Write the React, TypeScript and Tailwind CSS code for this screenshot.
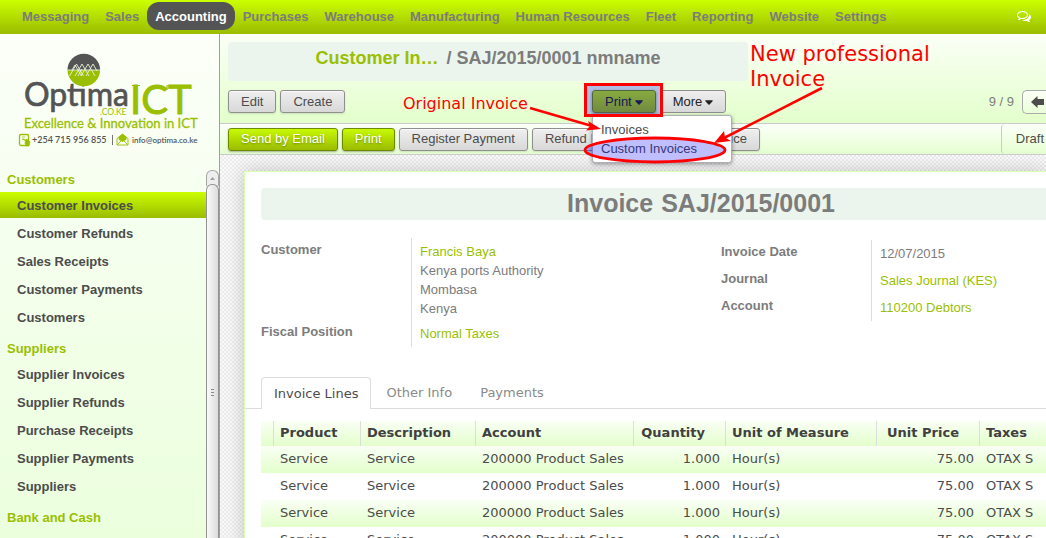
import React from "react";
import { FaCaretDown } from "react-icons/fa";

const menus = [
  "Messaging",
  "Sales",
  "Accounting",
  "Purchases",
  "Warehouse",
  "Manufacturing",
  "Human Resources",
  "Fleet",
  "Reporting",
  "Website",
  "Settings",
];

const sections = [
  {
    title: "Customers",
    items: ["Customer Invoices", "Customer Refunds", "Sales Receipts", "Customer Payments", "Customers"],
  },
  {
    title: "Suppliers",
    items: ["Supplier Invoices", "Supplier Refunds", "Purchase Receipts", "Supplier Payments", "Suppliers"],
  },
  { title: "Bank and Cash", items: [] },
];

const lines = [1, 2, 3, 4].map((id) => ({
  id,
  product: "Service",
  description: "Service",
  account: "200000 Product Sales",
  quantity: "1.000",
  unit: "Hour(s)",
  price: "75.00",
  taxes: "OTAX S",
}));

const greyButton =
  "flex h-[23px] shrink-0 items-center whitespace-nowrap rounded-[3px] border border-[#8f8f8f] bg-linear-to-b from-[#efefef] to-[#d8d8d8] px-3 text-[#4c4c4c] shadow-[0_1px_2px_rgba(0,0,0,0.12),inset_0_1px_0_rgba(255,255,255,0.7)]";
const greenButton =
  "flex h-[23px] shrink-0 items-center whitespace-nowrap rounded-[3px] border border-[#6f8800] bg-linear-to-b from-[#c8fa00] to-[#9abc00] px-3 text-white shadow-[0_1px_2px_rgba(0,0,0,0.3)] [text-shadow:0_1px_2px_rgba(0,0,0,0.35)]";

function Logo() {
  return (
    <svg
      className="block h-[133px] w-[219px]"
      viewBox="0 34 219 133"
      role="img"
      aria-label="Optima ICT"
      fontFamily="Lato, 'Open Sans', sans-serif"
    >
      <text x="24" y="106" fontSize="32" fill="#545454" stroke="#545454" strokeWidth="0.700">Optima</text>
      <path d="M67.500 70a16.300 16.300 0 0 1 32.600 0z" fill="#545454" />
      <path d="M67.500 70a16.300 16.300 0 0 0 32.600 0z" fill="#9abf00" />
      <path
        d="M67.500 70H100M69.500 76l7-12 7 12M75 76l7-12 7 12M81 76l7-12 7 12M72 70l3-5 6.500 11M78 76l4-7M86 76l7-12 4 7"
        fill="none"
        stroke="#e9f3d8"
        strokeWidth="0.900"
        strokeLinejoin="round"
      />
      <text x="130" y="114" fontSize="40" fill="#9abf00" stroke="#9abf00" strokeWidth="1">ICT</text>
      <path d="M132 85.500h8M167 85v5M190.500 85v4" stroke="#9abf00" strokeWidth="1.200" />
      <text x="100" y="115" fontSize="8.500" fill="#9abf00">.CO.KE</text>
      <text x="24" y="128" fontSize="13" fill="#9abf00" stroke="#9abf00" strokeWidth="0.300">Excellence &amp; Innovation in ICT</text>
      <rect x="19.500" y="134.500" width="9" height="11" rx="1.500" fill="none" stroke="#9abf00" strokeWidth="1.300" />
      <path d="M22 137h3M22 139h2l3 3M25 143l1-4 2 1 2 2-1 4h-3z" fill="#9abf00" stroke="#9abf00" strokeWidth="0.700" />
      <text x="32" y="143" fontSize="9" fontWeight="600" fill="#545454">+254 715 956 855</text>
      <path d="M112.500 135v10" stroke="#545454" strokeWidth="0.800" />
      <path d="M117 138.500l5.500-4.500 5.500 4.500v6.500h-11z" fill="#f9fff3" stroke="#9abf00" strokeWidth="0.900" />
      <path d="M118.500 137l4-3 4 3v2.500l-4 2.500-4-2.500z" fill="#9abf00" />
      <path d="M117 145l4-4M128 145l-4-4" stroke="#9abf00" strokeWidth="0.900" />
      <text x="132" y="143" fontSize="8" fontWeight="600" fill="#545454">info@optima.co.ke</text>
    </svg>
  );
}

function Sidebar() {
  return (
    <aside className="flex w-[220px] shrink-0 flex-col border-r border-[#a0a0a0] bg-linear-to-b from-[#fcfff9] to-[#ebffdd]">
      <Logo />
      <div className="flex min-h-0 flex-1">
        <nav className="min-w-0 flex-1 overflow-hidden font-bold">
          {sections.map((section) => (
            <section key={section.title} className="mb-1.5">
              <h2 className="pl-[7px] leading-[25px] text-[#9abf00]">{section.title}</h2>
              <ul className="flex flex-col gap-0.5">
                {section.items.map((item) => (
                  <li key={item}>
                    <a
                      href="#"
                      className={
                        item === "Customer Invoices"
                          ? "block bg-linear-to-b from-[#ccff00] to-[#9abc00] pl-[17px] pt-0.5 leading-6 text-[#4c4c4c]"
                          : "block pl-[17px] pt-0.5 leading-6 text-[#4c4c4c]"
                      }
                    >
                      {item}
                    </a>
                  </li>
                ))}
              </ul>
            </section>
          ))}
        </nav>
        <div className="mt-[3px] flex w-[13px] shrink-0 flex-col" aria-hidden="true">
          <div className="flex h-4 items-center justify-center rounded-t-md border border-b-0 border-[#a6a6a6] bg-[#eeeeee]">
            <svg className="h-[3px] w-[5px]" viewBox="0 0 5 3">
              <path d="M0 3L2.500 0 5 3z" fill="#a0a0a0" />
            </svg>
          </div>
          <div className="-mt-0.5 flex flex-1 items-center justify-center rounded-t-md border border-b-0 border-[#929292] bg-linear-to-r from-[#fafafa] to-[#dcdcdc]">
            <svg className="mb-[-62px] h-[7px] w-[3px]" viewBox="0 0 3 7">
              <path d="M0 .5h3M0 3.500h3M0 6.500h3" stroke="#8a8a8a" />
            </svg>
          </div>
        </div>
      </div>
    </aside>
  );
}

function Annotations() {
  return (
    <div className="pointer-events-none absolute inset-0 z-20 font-['DejaVu_Sans',sans-serif] text-[#ff0000]">
      <svg className="absolute left-0 top-0 h-[140px] w-[640px]" viewBox="220 34 640 140">
        <rect x="585.500" y="84.500" width="76" height="31" fill="#0000ff" fillOpacity="0.250" stroke="#ff0000" strokeWidth="3" />
        <ellipse cx="655" cy="150" rx="70" ry="12" fill="#0000ff" fillOpacity="0.250" stroke="#ff0000" strokeWidth="2.800" />
        <path d="M530 108L592 126" stroke="#ff0000" strokeWidth="2.600" />
        <path d="M601 129L586 130.500 590 126 588 121z" fill="#ff0000" />
        <path d="M822 88L724 138" stroke="#ff0000" strokeWidth="2.600" />
        <path d="M714 143L724 131 725 137.500 731 141z" fill="#ff0000" />
      </svg>
      <p className="absolute left-[183px] top-[60px] whitespace-nowrap text-[16px] leading-5">Original Invoice</p>
      <p className="absolute left-[530px] top-2 whitespace-nowrap text-[21px] leading-[25px]">
        New professional
        <br />
        Invoice
      </p>
    </div>
  );
}

function ViewHeader() {
  return (
    <div className="relative z-10">
      <div className="flex h-[90px] flex-col border-b border-[#cacaca] bg-linear-to-b from-[#fbfff6] to-[#e3ffcb] pl-2 pt-2">
        <h1 className="flex h-[39px] w-full max-w-[520px] items-center justify-center gap-2 rounded bg-[#ebf5ee] pb-[6px] text-[18px] font-bold text-[#7c7c7c]">
          <a href="#" className="text-[#9abf00]">Customer In…</a>
          <span>/ SAJ/2015/0001 nmname</span>
        </h1>
        <div className="mt-[9px] flex h-[23px] items-center">
          <div className="flex w-[364px] shrink-0 gap-1">
            <button className={greyButton}>Edit</button>
            <button className={greyButton}>Create</button>
          </div>
          <div className="relative flex gap-1">
            <button className="flex h-[23px] items-center gap-[3px] rounded-[3px] border border-[#6f8800] bg-linear-to-b from-[#b6e400] to-[#97b800] px-3 text-[#222222] shadow-[0_1px_3px_rgba(0,0,0,0.4)]">
              Print
              <FaCaretDown className="h-[14px] w-2" preserveAspectRatio="none" />
            </button>
            <button className="flex h-[23px] items-center gap-[3px] rounded-[3px] border border-[#8f8f8f] bg-linear-to-b from-[#efefef] to-[#d8d8d8] px-3 text-[#222222]">
              More
              <FaCaretDown className="h-[14px] w-2" preserveAspectRatio="none" />
            </button>
            <ul className="absolute left-0 top-[25px] h-12 w-[140px] rounded-[3px] border border-[#afafb6] bg-white py-1 shadow-[0_1px_4px_rgba(0,0,0,0.4)]">
              <li><a href="#" className="block pl-2 leading-[19px] text-[#4c4c4c]">Invoices</a></li>
              <li><a href="#" className="block pl-2 leading-[19px] text-[#4c4c4c]">Custom Invoices</a></li>
            </ul>
          </div>
          <div className="ml-auto flex items-center gap-2 text-[#7c7c7c]">
            <span>9 / 9</span>
            <button
              aria-label="Previous record"
              className="flex h-6 w-6 items-center justify-end rounded-l-[5px] border border-r-0 border-[#ababab] bg-linear-to-b from-[#fbfff6] to-[#eaffd8] pr-0.5"
            >
              <PreviousIcon />
            </button>
          </div>
        </div>
      </div>
      <div className="flex h-[31px] items-center gap-1 border-b border-[#cacaca] bg-linear-to-b from-[#fcfff9] to-[#e5ffd0] pl-2">
        <button className={greenButton}>Send by Email</button>
        <button className={greenButton}>Print</button>
        <button className={greyButton}>Register Payment</button>
        <button className={greyButton}>Refund Invoice</button>
        <button className={greyButton}>Cancel Invoice</button>
        <span className="ml-auto flex h-[30px] items-center rounded-l border-l border-[#cacaca] pl-[14px] pr-0.5 text-[#4c4c4c]">
          Draft
        </span>
      </div>
      <Annotations />
    </div>
  );
}

function PreviousIcon() {
  return (
    <svg className="h-3 w-[13px]" viewBox="0 0 13 12" aria-hidden="true">
      <path d="M0 6L6.500 0V3H13V9H6.500V12z" fill="#4c4c4c" />
    </svg>
  );
}

function MessagesIcon() {
  return (
    <svg className="size-[14px]" viewBox="0 0 1792 1792" fill="currentColor" aria-hidden="true">
      <path d="M704 384q-153 0-286 52t-211.500 141-78.500 191q0 82 53 158t149 132l97 56-35 84q34-20 62-39l44-31 53 10q78 14 153 14 153 0 286-52t211.500-141 78.500-191-78.500-191-211.500-141-286-52zm0-128q191 0 353.500 68.500t256.500 186.500 94 257-94 257-256.500 186.500-353.500 68.500q-86 0-176-16-124 88-278 128-36 9-86 16h-3q-11 0-20.500-8t-11.500-21q-1-3-1-6.500t.5-6.500 2-6l2.500-5 3.500-5.500 4-5 4.500-5 4-4.500q5-6 23-25t26-29.500 22.500-29 25-38.500 20.500-44q-124-72-195-177t-71-224q0-139 94-257t256.500-186.500 353.500-68.500zm822 1169q10 24 20.500 44t25 38.500 22.500 29 26 29.500 23 25q1 1 4 4.500t4.500 5 4 5 3.500 5.500l2.500 5 2 6 .5 6.500-1 6.500q-3 14-13 22t-22 7q-50-7-86-16-154-40-278-128-90 16-176 16-271 0-472-132 58 4 88 4 161 0 309-45t264-129q125-92 192-212t67-254q0-77-23-152 129 71 204 178t75 230q0 120-71 224.500t-195 176.500z" />
    </svg>
  );
}

const term = "pt-0.5 font-bold";
const value = "border-l border-[#dddddd] pl-2 pt-1";
const link = "block text-[#9abf00]";

function InvoiceLines() {
  const head = "border-r border-[#dddddd] px-1.5 pb-0.5 pt-0 text-left font-bold whitespace-nowrap";
  const headRight = "border-r border-[#dddddd] pb-0.5 pt-0 pr-5 text-right font-bold whitespace-nowrap";
  const cell = "whitespace-nowrap px-1.5 pb-0.5";
  const cellRight = "whitespace-nowrap pb-0.5 pr-1.5 text-right";
  return (
    <table className="mt-3 w-full table-fixed border-separate border-spacing-0 text-[#4c4c4c]">
      <colgroup>
        <col className="w-[13px]" />
        <col className="w-[87px]" />
        <col className="w-[115px]" />
        <col className="w-[158px]" />
        <col className="w-[92px]" />
        <col className="w-[151px]" />
        <col className="w-[103px]" />
        <col />
      </colgroup>
      <thead>
        <tr className="h-[25px] bg-linear-to-b from-[#fafff5] to-[#e3ffcb] text-[#404040]">
          <td className="border-r border-[#dddddd]" />
          <th className={head}>Product</th>
          <th className={head}>Description</th>
          <th className={head}>Account</th>
          <th className={headRight}>Quantity</th>
          <th className={head}>Unit of Measure</th>
          <th className={headRight}>Unit Price</th>
          <th className="px-1.5 pb-0.5 pt-0 text-left font-bold">Taxes</th>
        </tr>
      </thead>
      <tbody>
        {lines.map((line) => (
          <tr key={line.id} className="h-[27px] odd:bg-linear-to-b odd:from-[#fafff5] odd:to-[#e3ffcb]">
            <td />
            <td className={cell}>{line.product}</td>
            <td className={cell}>{line.description}</td>
            <td className={cell}>{line.account}</td>
            <td className={cellRight}>{line.quantity}</td>
            <td className={cell}>{line.unit}</td>
            <td className={cellRight}>{line.price}</td>
            <td className={cell}>{line.taxes}</td>
          </tr>
        ))}
      </tbody>
    </table>
  );
}

function Sheet() {
  return (
    <div className="min-h-0 flex-1 overflow-hidden bg-[repeating-conic-gradient(#ebebeb_0_25%,#fafafa_0_50%)] bg-[length:4px_4px] pl-6 pt-4">
      <div className="min-h-full border-l border-t border-[#d9ffb0] bg-white shadow-[0_0_18px_rgba(0,0,0,0.2)]">
        <div className="min-w-[896px] pl-4 pt-4">
          <h2 className="flex h-8 items-center justify-center gap-2 rounded bg-[#ebf5ee] text-[25px] font-bold">
            <span>Invoice</span>
            <span>SAJ/2015/0001</span>
          </h2>
          <div className="mt-[18px] grid grid-cols-2 items-start gap-10 leading-[19px]">
            <dl className="grid grid-cols-[150px_1fr] grid-rows-[82px_27px]">
              <dt className={term}>Customer</dt>
              <dd className={value}>
                <a href="#" className={link}>Francis Baya</a>
                Kenya ports Authority
                <br />
                Mombasa
                <br />
                Kenya
              </dd>
              <dt className={term}>Fiscal Position</dt>
              <dd className={value}>
                <a href="#" className={link}>Normal Taxes</a>
              </dd>
            </dl>
            <dl className="mt-0.5 grid auto-rows-[27px] grid-cols-[150px_1fr]">
              <dt className={term}>Invoice Date</dt>
              <dd className={value}>12/07/2015</dd>
              <dt className={term}>Journal</dt>
              <dd className={value}><a href="#" className={link}>Sales Journal (KES)</a></dd>
              <dt className={term}>Account</dt>
              <dd className={value}><a href="#" className={link}>110200 Debtors</a></dd>
            </dl>
          </div>
          <div className="font-['DejaVu_Sans',sans-serif]">
            <div role="tablist" className="-ml-4 mt-[30px] flex h-8 gap-0.5 border-b border-[#dddddd] pl-4">
              <button role="tab" aria-selected="true" className="-mb-px rounded-t border border-b-0 border-[#dddddd] bg-white px-3 text-[#4c4c4c]">
                Invoice Lines
              </button>
              <button role="tab" aria-selected="false" className="px-[13px] text-[#8a8a8a]">Other Info</button>
              <button role="tab" aria-selected="false" className="px-[13px] text-[#8a8a8a]">Payments</button>
            </div>
            <InvoiceLines />
          </div>
        </div>
      </div>
    </div>
  );
}

export default function App() {
  return (
    <div className="flex h-screen flex-col overflow-hidden font-['Liberation_Sans',Arial,sans-serif] text-[13px] text-[#7c7c7c]">
      <header className="flex h-[34px] shrink-0 items-center bg-linear-to-b from-[#ccff00] to-[#9abc00] pb-0.5 pl-[14px] pr-[15px]">
        <nav className="flex flex-1 font-bold">
          {menus.map((menu) => (
            <a
              key={menu}
              href="#"
              className={
                menu === "Accounting"
                  ? "whitespace-nowrap rounded-xl bg-[#545454] px-2 pt-0.5 leading-[26px] text-white"
                  : "whitespace-nowrap px-2 pt-0.5 leading-[26px] text-[#7c7c7c]"
              }
            >
              {menu}
            </a>
          ))}
        </nav>
        <button aria-label="Messages" className="text-white">
          <MessagesIcon />
        </button>
      </header>
      <div className="flex min-h-0 flex-1">
        <Sidebar />
        <main className="flex min-w-0 flex-1 flex-col overflow-hidden">
          <ViewHeader />
          <Sheet />
        </main>
      </div>
    </div>
  );
}
